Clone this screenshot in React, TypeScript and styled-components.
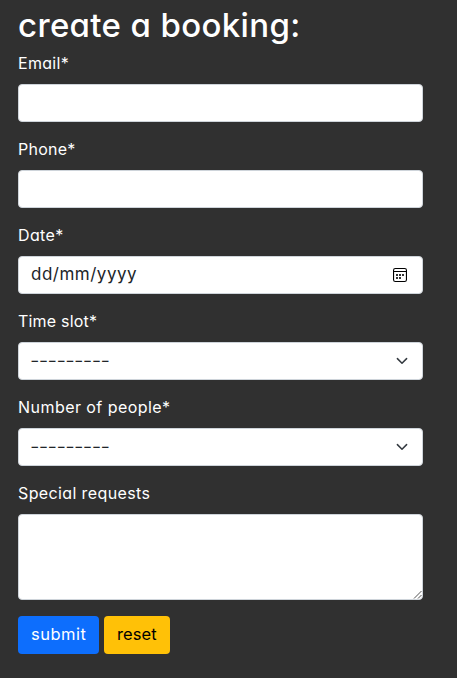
import React from 'react';
import styled, { createGlobalStyle } from 'styled-components';

const GlobalStyle = createGlobalStyle`
  *, *::before, *::after { box-sizing: border-box; }
  body {
    margin: 0;
    background: #303030;
    color: #fff;
    font-family: Inter, "Open Sans", sans-serif;
    font-feature-settings: "cv11" 1, "calt" 0;
    font-size: 16px;
    line-height: 24px;
  }
`;

const Page = styled.main`
  min-height: 678px;
  padding: 6px 34px 24px 18px;
`;

const Title = styled.h2`
  margin: 0 0 8px;
  font-size: 33px;
  font-weight: 500;
  line-height: 38px;
  white-space: nowrap;
  letter-spacing: 0.35px;
`;

const Field = styled.div`
  margin-bottom: 16px;
`;

const Label = styled.label<{ $track: number }>`
  display: block;
  width: fit-content;
  margin-bottom: 10px;
  line-height: 22px;
  white-space: nowrap;
  letter-spacing: ${(p) => p.$track}px;
`;

const Control = styled.div`
  display: flex;
  align-items: center;
  justify-content: space-between;
  height: 38px;
  padding: 0 12px;
  border: 1px solid #ced4da;
  border-radius: 4px;
  background: #fff;
  color: #212529;
`;

const Input = styled.input`
  display: block;
  width: 100%;
  height: 38px;
  padding: 6px 12px;
  border: 1px solid #ced4da;
  border-radius: 4px;
  background: #fff;
  color: #212529;
  font: inherit;
`;

const Value = styled.span`
  padding-bottom: 2px;
  font-size: 17px;
  letter-spacing: 0.5px;
`;

const Dashes = styled.span`
  margin-left: -1px;
  padding-bottom: 1px;
  font-size: 21px;
  font-weight: 300;
  line-height: 24px;
  letter-spacing: -0.7px;
`;

const TextBox = styled.div`
  position: relative;
  height: 86px;
`;

const Area = styled.textarea`
  display: block;
  width: 100%;
  height: 86px;
  padding: 6px 12px;
  border: 1px solid #ced4da;
  border-radius: 4px;
  background: #fff;
  color: #212529;
  font: inherit;
  resize: none;
`;

const Grip = styled.svg`
  position: absolute;
  right: 1px;
  bottom: 1px;
`;

const Actions = styled.div`
  display: flex;
  gap: 5px;
`;

const Button = styled.button<{ $tone: 'primary' | 'warning'; $track: number }>`
  width: ${(p) => (p.$tone === 'primary' ? 81 : 66)}px;
  height: 38px;
  padding: 0 0 2px 13px;
  border: 0;
  border-radius: 4px;
  background: ${(p) => (p.$tone === 'primary' ? '#0d6efd' : '#ffc107')};
  color: ${(p) => (p.$tone === 'primary' ? '#fff' : '#000')};
  font: inherit;
  font-size: 16.5px;
  font-feature-settings: inherit;
  text-align: left;
  letter-spacing: ${(p) => p.$track}px;
`;

const CalendarIcon = () => (
  <svg width="20" height="16" viewBox="0 0 20 16" fill="none">
    <rect x="3.55" y="1.55" width="12.9" height="12.9" rx="1.8" stroke="#000" strokeWidth="1.1" />
    <path d="M4 4.5h12" stroke="#000" />
    <path
      d="M6 7h2v2H6zM9 7h2v2H9zM12 7h2v2h-2zM6 10h2v2H6zM9 10h2v2H9z"
      fill="#333"
    />
  </svg>
);

const Chevron = () => (
  <svg width="16" height="12" viewBox="0 0 16 12" fill="none">
    <path
      d="M3.4 3.6L8 8.2l4.6-4.6"
      stroke="#343a40"
      strokeWidth="1.5"
      strokeLinecap="round"
      strokeLinejoin="round"
    />
  </svg>
);

export default function App() {
  return (
    <Page>
      <GlobalStyle />
      <Title>create a booking:</Title>
      <form onSubmit={(e) => e.preventDefault()}>
        <Field>
          <Label htmlFor="email" $track={0.3}>Email*</Label>
          <Input id="email" type="email" />
        </Field>
        <Field>
          <Label htmlFor="phone" $track={0.25}>Phone*</Label>
          <Input id="phone" type="tel" />
        </Field>
        <Field>
          <Label $track={0.35}>Date*</Label>
          <Control>
            <Value>dd/mm/yyyy</Value>
            <CalendarIcon />
          </Control>
        </Field>
        <Field>
          <Label $track={0.2}>Time slot*</Label>
          <Control>
            <Dashes>---------</Dashes>
            <Chevron />
          </Control>
        </Field>
        <Field>
          <Label $track={0.45}>Number of people*</Label>
          <Control>
            <Dashes>---------</Dashes>
            <Chevron />
          </Control>
        </Field>
        <Field>
          <Label htmlFor="requests" $track={0.38}>Special requests</Label>
          <TextBox>
            <Area id="requests" />
            <Grip width="9" height="9" viewBox="0 0 9 9">
              <path d="M1 8.5L8.5 1M5 8.5L8.5 5" stroke="#555" strokeWidth="1" />
            </Grip>
          </TextBox>
        </Field>
        <Actions>
          <Button type="submit" $tone="primary" $track={0.5}>submit</Button>
          <Button type="reset" $tone="warning" $track={0.1}>reset</Button>
        </Actions>
      </form>
    </Page>
  );
}
